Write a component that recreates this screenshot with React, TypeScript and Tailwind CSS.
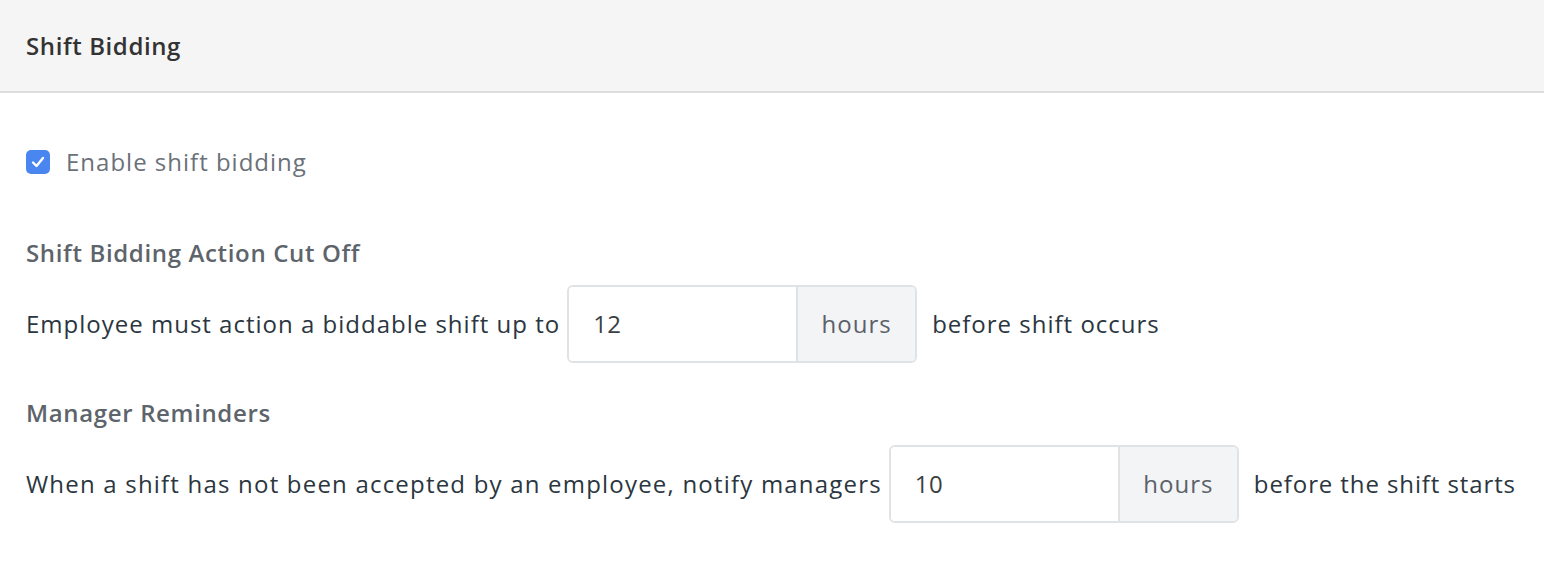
import React, { useState } from 'react';

const HoursInput = ({ value }: { value: string }) => (
  <div className="flex shrink-0 h-[78px] w-[350px] rounded-[6px] border-2 border-[#dfe3e6] overflow-hidden">
    <input
      defaultValue={value}
      className="w-[227px] px-[24px] text-[24px] text-[#3a3f44] tracking-[0.5px] outline-none bg-white"
    />
    <div className="flex-1 flex items-center justify-center border-l-2 border-[#dfe3e6] bg-[#f3f4f6] text-[24px] text-[#5b6168] tracking-[1px]">
      hours
    </div>
  </div>
);

export default function App() {
  const [enabled, setEnabled] = useState(true);

  return (
    <div className="w-[1544px] h-[568px] bg-white font-['Open_Sans','Noto_Sans',sans-serif]">
      <div className="h-[93px] bg-[#f5f5f5] border-b-2 border-[#dddddd] flex items-center px-[26px]">
        <h2 className="text-[24px] font-semibold text-[#333333] tracking-[0.6px]">Shift Bidding</h2>
      </div>

      <div className="px-[26px]">
        <label className="flex items-center gap-[16px] mt-[55px] h-[28px] cursor-pointer">
          <span
            onClick={() => setEnabled(!enabled)}
            className={`w-[24px] h-[24px] rounded-[5px] flex items-center justify-center ${enabled ? 'bg-[#4a86f0]' : 'bg-white border-2 border-[#c9ced3]'}`}
          >
            {enabled && (
              <svg width="16" height="16" viewBox="0 0 16 16" fill="none">
                <path d="M3 8.5 L6.5 12 L13 4" stroke="white" strokeWidth="2.4" strokeLinecap="round" strokeLinejoin="round" />
              </svg>
            )}
          </span>
          <span className="text-[24px] text-[#6b7178] tracking-[1px]">Enable shift bidding</span>
        </label>

        <h3 className="mt-[62px] text-[24px] font-semibold text-[#5d646b] leading-[30px] tracking-[0.65px]">Shift Bidding Action Cut Off</h3>
        <div className="mt-[17px] flex items-center gap-[7px] text-[24px] text-[#2b3640] tracking-[1px] whitespace-nowrap">
          <span>Employee must action a biddable shift up to</span>
          <HoursInput value="12" />
          <span className="ml-[8px]">before shift occurs</span>
        </div>

        <h3 className="mt-[35px] text-[24px] font-semibold text-[#5d646b] leading-[30px] tracking-[0.65px]">Manager Reminders</h3>
        <div className="mt-[17px] flex items-center gap-[7px] text-[24px] text-[#2b3640] tracking-[1.2px] whitespace-nowrap">
          <span>When a shift has not been accepted by an employee, notify managers</span>
          <HoursInput value="10" />
          <span className="ml-[8px] tracking-[0.9px]">before the shift starts</span>
        </div>
      </div>
    </div>
  );
}
